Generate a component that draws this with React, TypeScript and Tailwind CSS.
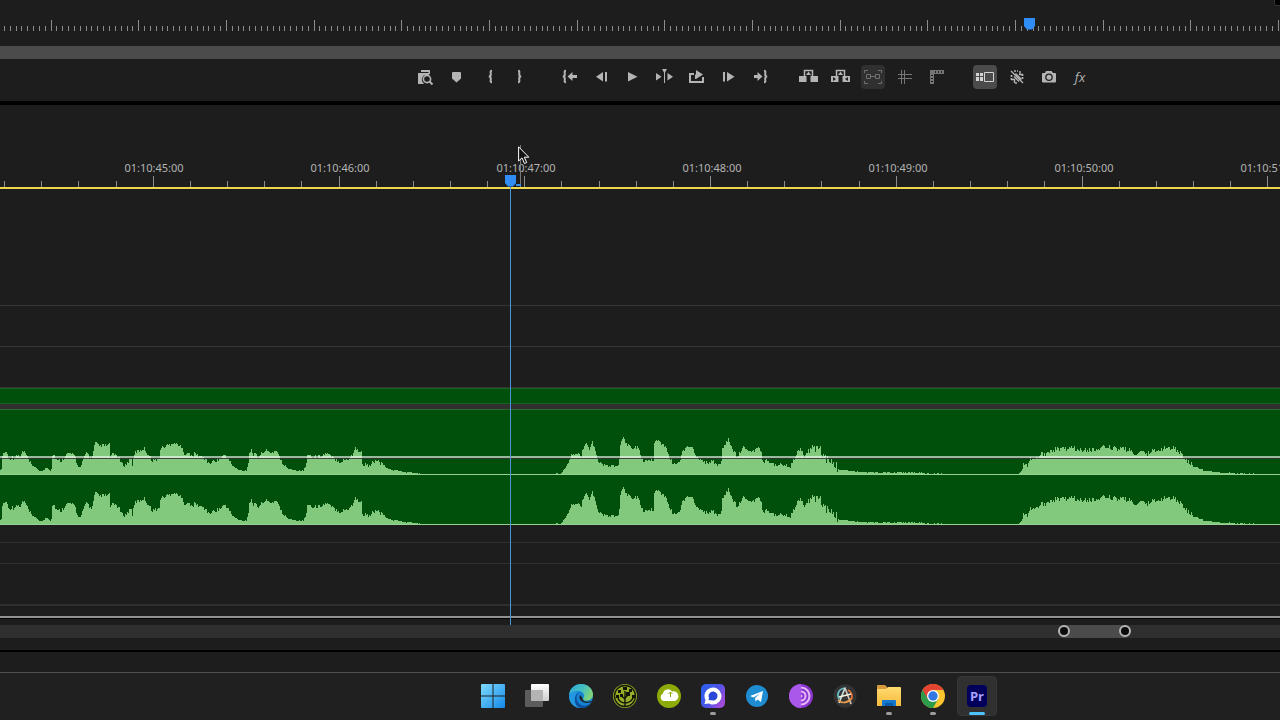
import React from 'react'

type Point = [number, number]

// x position, peak height above the channel baseline
const PEAKS: Point[] = [
  [0, 5], [1, 5], [2, 20], [5, 23], [7, 22], [8, 16], [13, 17], [18, 19], [20, 17], [22, 23], [24, 22], [26, 20],
  [28, 14], [31, 10], [35, 7], [39, 4], [43, 4], [46, 7], [50, 4], [51, 6], [52, 20], [54, 19], [57, 13], [62, 15],
  [65, 20], [69, 21], [72, 20], [75, 17], [77, 9], [80, 7], [83, 15], [86, 22], [88, 20], [90, 16], [92, 18],
  [94, 28], [95, 32], [98, 29], [104, 29], [109, 30], [110, 19], [115, 20], [118, 17], [122, 10], [126, 10],
  [131, 17], [132, 10], [134, 19], [135, 22], [139, 24], [144, 26], [148, 20], [152, 14], [159, 16], [160, 26],
  [165, 28], [172, 32], [178, 30], [182, 26], [183, 21], [187, 22], [191, 18], [195, 21], [200, 18], [205, 16],
  [208, 11], [215, 14], [220, 16], [225, 20], [229, 14], [232, 9], [237, 5], [240, 4], [246, 4], [248, 12],
  [249, 22], [251, 25], [253, 20], [258, 18], [264, 24], [270, 22], [277, 24], [280, 14], [284, 9], [288, 6],
  [293, 5], [298, 4], [303, 4], [306, 10], [307, 19], [309, 21], [312, 17], [318, 18], [326, 21], [332, 17],
  [340, 13], [348, 16], [353, 21], [355, 27], [358, 24], [361, 22], [362, 11], [367, 9], [372, 12], [377, 14],
  [382, 10], [387, 6], [394, 4], [397, 5], [400, 3], [410, 2], [418, 1], [430, 0], [550, 0], [556, 1], [561, 1],
  [563, 4], [566, 8], [570, 18], [574, 20], [577, 21], [581, 18], [582, 25], [585, 31], [589, 27], [592, 33],
  [594, 26], [597, 14], [603, 10], [610, 8], [618, 9], [619, 14], [620, 28], [622, 35], [624, 36], [626, 30],
  [630, 28], [636, 27], [638, 26], [640, 20], [643, 13], [648, 15], [653, 14], [654, 30], [656, 35], [660, 31],
  [666, 27], [668, 20], [672, 12], [675, 9], [679, 13], [682, 22], [687, 29], [692, 27], [695, 21], [700, 14],
  [706, 12], [712, 13], [719, 9], [721, 14], [722, 26], [725, 30], [728, 35], [730, 30], [734, 22], [737, 18],
  [743, 27], [750, 23], [755, 24], [759, 28], [761, 21], [762, 13], [768, 14], [775, 10], [785, 9], [790, 7],
  [793, 14], [797, 22], [800, 25], [804, 18], [808, 25], [811, 29], [814, 25], [817, 27], [820, 24], [823, 22],
  [825, 15], [830, 14], [834, 12], [838, 5], [845, 4], [853, 3], [880, 2], [898, 2], [916, 2], [930, 1],
  [970, 0], [1018, 0], [1020, 3], [1024, 11], [1027, 9], [1030, 16], [1035, 17], [1040, 20], [1047, 22],
  [1054, 25], [1060, 25], [1070, 27], [1080, 25], [1088, 24], [1098, 26], [1106, 28], [1120, 25], [1130, 25],
  [1135, 20], [1139, 24], [1145, 20], [1155, 25], [1165, 26], [1172, 28], [1178, 23], [1184, 17], [1190, 11],
  [1196, 8], [1203, 4], [1212, 3], [1222, 2], [1240, 1], [1280, 0],
]

// how strongly the peaks flutter at x
const flutter = (x: number, base: number) => {
  if (x > 806 && x < 838) return 10
  if (x > 1020 && x < 1195) return 5
  return base > 8 ? 4 : 1
}

const wavePath = () => {
  let d = 'M0 50'
  let i = 0
  for (let x = 0; x < 1280; x++) {
    while (i < PEAKS.length - 2 && PEAKS[i + 1][0] <= x) i++
    const [x0, h0] = PEAKS[i]
    const [x1, h1] = PEAKS[i + 1]
    const base = h0 + ((h1 - h0) * (x - x0)) / (x1 - x0)
    const noise = Math.abs(Math.sin(x * 12.9898) * 43758.5453) % 1
    const h = Math.max(0.5, base + (noise - 0.5) * flutter(x, base))
    d += `V${(49.5 - h).toFixed(1)}H${x + 1}`
  }
  return d + 'V50Z'
}

const WAVE = wavePath()

const LABELS = ['01:10:45:00', '01:10:46:00', '01:10:47:00', '01:10:48:00', '01:10:49:00', '01:10:50:00', '01:10:51:00']

const ToolGroup = ({ children }: { children: React.ReactNode }) => <div className="flex gap-2">{children}</div>

type ToolProps = { label: string; look?: string; children: React.ReactNode }

const Tool = ({ label, look = 'text-[#b4b4b4]', children }: ToolProps) => (
  <button type="button" aria-label={label} className={`size-6 rounded-[4px] ${look}`}>
    <svg viewBox="0 0 24 24" className="size-6" fill="currentColor" aria-hidden="true">{children}</svg>
  </button>
)

const Brace = ({ x, flip }: { x: number; flip?: boolean }) => (
  <g transform={flip ? `translate(${x} 5) scale(-1 1)` : `translate(${x} 5)`}>
    <path
      d="M4 .8C2 .8 2.8 2.5 2.8 4.2C2.8 5.7 2.2 6.5 .8 6.5C2.2 6.5 2.8 7.3 2.8 8.8C2.8 10.5 2 12.2 4 12.2"
      fill="none"
      stroke="currentColor"
      strokeWidth="2"
    />
  </g>
)

const LiftShape = () => (
  <>
    <path d="M2 11H9.500V17H2ZM13.500 11H21V17H13.500Z" />
    <path d="M7.500 11V5.500H15.500V11" fill="none" stroke="currentColor" strokeWidth="1.500" />
    <path d="M11.500 6.500L14 10H9Z" />
  </>
)

const Toolbar = () => (
  <div className="flex h-[42px] items-center justify-center gap-6 pb-[6px] pl-[226px]">
    <ToolGroup>
      <Tool label="Match frame">
        <path d="M8 5H17V9H15.5V7H8ZM5 8H9L10 9H15C11 9 8.5 12 9 16L11 19H5Z" />
        <path d="M9 8H16V10H9Z" />
        <circle cx="14" cy="14" r="3.6" fill="#1d1d1d" stroke="currentColor" strokeWidth="1.6" />
        <path d="M16.5 16.5L19.5 19.5" stroke="currentColor" strokeWidth="2" />
      </Tool>
      <Tool label="Add marker"><path d="M7 8Q7 7 8 7H15Q16 7 16 8V13.5L11.5 17.5L7 13.5Z" /></Tool>
      <Tool label="Mark in"><Brace x={11} /></Tool>
      <Tool label="Mark out"><Brace x={13} flip /></Tool>
    </ToolGroup>
    <ToolGroup>
      <Tool label="Go to in">
        <Brace x={5} />
        <path d="M10.5 11.5L15.500 7V10H20V13H15.500V16Z" />
      </Tool>
      <Tool label="Step back"><path d="M14 7V16.5L7 11.8ZM16 7H18V16.5H16Z" /></Tool>
      <Tool label="Play"><path d="M7 7L16.5 11.8L7 16.5Z" /></Tool>
      <Tool label="Play around">
        <path d="M3 8L8.5 11.8L3 15.5ZM14.5 8L20 11.8L14.5 15.5ZM9 4H14L12 7.5V18H11V7.5Z" />
      </Tool>
      <Tool label="Loop">
        <path d="M9 9H5V17H18V12" fill="none" stroke="currentColor" strokeWidth="2" />
        <path d="M10 14V9.5H11V5L18 9.5L11 14Z" />
      </Tool>
      <Tool label="Step forward"><path d="M6 7H8V16.5H6ZM10 7L17.5 11.8L10 16.5Z" /></Tool>
      <Tool label="Go to out">
        <Brace x={19} flip />
        <path d="M13.5 11.5L8.500 7V10H5V13H8.500V16Z" />
      </Tool>
    </ToolGroup>
    <ToolGroup>
      <Tool label="Lift"><LiftShape /></Tool>
      <Tool label="Extract">
        <LiftShape />
        <path d="M4 12L7 14L4 16ZM19 12L16 14L19 16Z" fill="#1d1d1d" />
      </Tool>
      <Tool label="Safe margins" look="bg-[#303030] text-[#707070]">
        <path d="M3.5 8V5.5H7M17 5.5H20.5V8M20.5 16V18.5H17M7 18.5H3.5V16M5.5 9.5H9.5V13.5H5.5ZM14.5 9.5H18.5V13.5H14.5ZM9.5 11.500H14.5" fill="none" stroke="currentColor" />
      </Tool>
      <Tool label="Show guides" look="text-[#757575]">
        <path d="M5 9.5H19M5 13.5H19M8.5 5V19M11.5 5V19" stroke="currentColor" />
      </Tool>
      <Tool label="Show rulers" look="text-[#757575]">
        <path d="M5 5H19V9H9V19H5Z" />
        <path d="M10.5 6V8M13.5 6V8M16.5 6V8M6 10.5H8M6 13.5H8M6 16.5H8" stroke="#1d1d1d" />
      </Tool>
    </ToolGroup>
    <ToolGroup>
      <Tool label="Multi-camera" look="bg-[#4b4b4b] text-[#d4d4d4]">
        <path d="M3 8H6V11H3ZM7 8H10V11H7ZM3 12H6V16H3ZM7 12H10V16H7Z" />
        <path d="M11.5 7.5H20.5V16.5H11.5Z" fill="none" stroke="currentColor" />
      </Tool>
      <Tool label="Proxies">
        <g fill="none" stroke="currentColor" strokeWidth="1.7">
          <path d="M6.500 10V16M9 6H13M10 18H13M17.500 9V15" strokeDasharray="2 1" />
          <path d="M6 6L18 18M9 11.500L14 16.500M10.500 8.500L16.500 14.500" strokeWidth="1.300" />
          <path d="M14 9.500H18M15 6V10M6 14.500H10M9.500 14V18" strokeWidth="1.400" />
        </g>
      </Tool>
      <Tool label="Export frame">
        <path fillRule="evenodd" d="M9 6H14.500L16 8H18Q19 8 19 9V16.500Q19 17.500 18 17.500H6Q5 17.500 5 16.500V9Q5 8 6 8H8ZM12 8.500A3.800 3.800 0 1 0 12 16.100A3.800 3.800 0 1 0 12 8.500Z" />
        <circle cx="12" cy="12.300" r="2.500" />
      </Tool>
      <button type="button" className="size-6 pr-[2px] font-['Open_Sans','Noto_Sans',sans-serif] text-[13px] leading-6 text-[#b4b4b4] italic">fx</button>
    </ToolGroup>
  </div>
)

type TicksProps = { start: number; step: number; every: number; count: number; low: number }

const Ticks = ({ start, step, every, count, low }: TicksProps) => (
  <svg className="block h-[11px] w-full" shapeRendering="crispEdges" aria-hidden="true">
    {Array.from({ length: count }, (_, i) => (
      <rect key={i} x={Math.round(start + i * step)} y={i % every === 0 ? 0 : low} width="1" height="11" fill="#8c8c8c" />
    ))}
  </svg>
)

const Marker = () => (
  <svg viewBox="0 0 11 12" className="block h-3 w-[11px]" aria-hidden="true">
    <path d="M0 0H11V8L8 11.500H3L0 8Z" fill="#2f8df5" />
  </svg>
)

const Channel = () => (
  <svg viewBox="0 0 1280 50" preserveAspectRatio="none" className="block h-[50px] w-full" aria-hidden="true">
    <path d={WAVE} fill="#82c97e" shapeRendering="crispEdges" />
    <rect y="49" width="1280" height="1" fill="#96d392" />
  </svg>
)

const Timeline = () => (
  <section className="relative overflow-hidden border-t-4 border-black">
    <div className="h-[71px] pt-[55px]">
      <div className="flex pl-[61px] font-['Noto_Sans','Open_Sans',sans-serif] text-[11px] leading-4 text-[#b4b4b4]">
        {LABELS.map(t => (
          <span key={t} className="w-[186px] shrink-0 text-center">{t}</span>
        ))}
      </div>
    </div>
    <Ticks start={-33} step={37.15} every={5} count={80} low={5} />
    <div className="h-[2px] bg-[#ebd84e]" />
    <div className="h-[117px] border-b border-[#343434]" />
    <div className="h-[41px] border-b border-[#343434]" />
    <div className="h-[41px] border-b border-[#343434]" />
    <div className="h-4 border-y border-[#16611f] bg-[#00500b]" />
    <div className="h-[5px] bg-[#2f2f2f]" />
    <div className="relative border-t border-[#2a6a30] bg-[#00500b] pt-[15px]">
      <Channel />
      <Channel />
      <div className="absolute inset-x-0 top-[46px] h-[3px] border-b border-black/70 bg-white/60" />
    </div>
    <div className="h-[18px] border-b border-[#303030]" />
    <div className="h-[21px] border-b border-[#303030]" />
    <div className="h-[42px] border-b-2 border-[#2f2f2f]" />
    <div className="h-3 border-b-2 border-[#919191]" />
    <div className="h-[7px] border-t border-black" />
    <svg className="absolute top-[40px] left-[516px] h-[43px] w-2" shapeRendering="crispEdges" aria-hidden="true">
      <path d="M4 0H5V42H4Z" fill="#777" />
      <path d="M0 39H5V41H0Z" fill="#2f8df5" />
    </svg>
    <div className="absolute top-[70px] bottom-0 left-[505px] flex flex-col items-center">
      <Marker />
      <div className="w-px grow bg-[#4a93dc]" />
    </div>
    <svg viewBox="0 0 12 19" className="absolute top-[41px] left-[518px] h-[19px] w-3" aria-hidden="true">
      <path d="M.6 .8V15L4 11.900L6.500 17.500L8.700 16.500L6.300 11.200H10.800Z" fill="#111" stroke="#fff" />
    </svg>
  </section>
)

const Knob = ({ label }: { label: string }) => (
  <button type="button" aria-label={label} className="size-3 shrink-0 rounded-full border-2 border-[#b4b4b4] bg-[#0c0c0c]" />
)

const ZoomBar = () => (
  <div className="flex h-[13px] justify-end bg-[#2f2f2f] pr-[149px]">
    <div className="flex w-[73px] justify-between rounded-full bg-[#4b4b4b]">
      <Knob label="Zoom start" />
      <Knob label="Zoom end" />
    </div>
  </div>
)

const TASKS: { name: string; open?: boolean; active?: boolean; art: React.ReactNode }[] = [
  {
    name: 'Start',
    art: <path d="M0 1Q0 0 1 0H11.500V11.500H0ZM12.500 0H23Q24 0 24 1V11.500H12.500ZM0 12.500H11.500V24H1Q0 24 0 23ZM12.500 12.500H24V23Q24 24 23 24H12.500Z" fill="url(#win)" />,
  },
  {
    name: 'Task view',
    art: (
      <>
        <rect y="6" width="18" height="17" rx="1" fill="#5c5c5c" />
        <rect x="6" width="18" height="17" rx="1" fill="url(#pane)" />
        <rect x="6" y="6" width="12" height="11" fill="#b4b4b4" />
      </>
    ),
  },
  {
    name: 'Edge',
    art: (
      <>
        <circle cx="12" cy="12" r="12" fill="#1583d4" />
        <path d="M0 11C1 4 6 0 12 0C19 0 24 5 24 10.500C24 15 20 17 16 16.500C13.500 16 14 14.500 15 13C16 10 13 7 9 7C5 7 1.500 9 0 11Z" fill="url(#edge)" />
        <path d="M0 12C2 8 6 7 9 8C6 10 5 14 7 18C9 21 12 23 15 23.500C6 26 0 19 0 12Z" fill="#2397e0" />
        <path d="M10 9C6 12 7 18 12 21C16 23 20 21 22.500 18.500C20 22 17 24 13 24C8 24 5 19 6 14C6.500 11 8 9 10 9Z" fill="#0c4f9e" />
        <path d="M11 11C9 15 13 19 18 19C20 19 22 18 22.500 18C23 17.500 22.500 17 22 17C18 19 13 17 13.500 14Z" fill="#202020" />
      </>
    ),
  },
  {
    name: 'Tree',
    art: (
      <>
        <circle cx="12" cy="12" r="12" fill="#96ac2a" />
        <circle cx="12" cy="12" r="10.500" fill="none" stroke="#171a05" strokeWidth="1.300" />
        <path d="M5 6H8V9H5ZM10 3H14V6H10ZM16 5H19V8H16ZM3 11H6V14H3ZM7 10H10V13H7ZM13 8H17V12H13ZM19 11H22V14H19Z" fill="#111405" />
        <path d="M12 22V7M12 19C9 19 5 17 5 13M12 19C15 19 20 17 20 13M12 15L8.500 12M12 14L15 11" stroke="#111405" strokeWidth="1.400" fill="none" />
      </>
    ),
  },
  {
    name: 'Cloud',
    art: (
      <>
        <circle cx="12" cy="12" r="12" fill="#8cab08" />
        <path d="M6.500 17A4 4 0 0 1 6 9.500A5 5 0 0 1 15 7.500A4.800 4.800 0 0 1 18 16.900Z" fill="#fff" />
        <path d="M13.500 8V13M11.500 10L13.500 8L15.500 10" fill="none" stroke="#8cab08" />
      </>
    ),
  },
  {
    name: 'Messenger',
    open: true,
    art: (
      <>
        <rect width="24" height="24" rx="5" fill="url(#chat)" />
        <path d="M3.500 20L4.500 16A8.500 8.500 0 1 1 12 20.500C10 20.500 9 20 8 19.500Z" fill="#fff" />
        <path d="M7.500 16L8 14A4.500 4.500 0 1 1 12 16.500Z" fill="#2d48d8" />
      </>
    ),
  },
  {
    name: 'Telegram',
    art: (
      <>
        <circle cx="12" cy="12" r="11" fill="#1e8dd2" />
        <path d="M5 12L18 7L16 18L12.500 15.500L10.500 17.500L10 14L15 9.500L8.500 13.500Z" fill="#fff" />
      </>
    ),
  },
  {
    name: 'Tor',
    art: (
      <>
        <circle cx="12" cy="12" r="12" fill="#8e35d1" />
        <path d="M12 0A12 12 0 0 0 12 24Z" fill="#aa58e8" />
        <path d="M12 3.500A8.500 8.500 0 0 1 12 20.500M12 7.500A4.500 4.500 0 0 1 12 16.500" fill="none" stroke="#e2b9f8" strokeWidth="2" />
        <path d="M12 10.500A1.500 1.500 0 0 1 12 13.500" fill="#e2b9f8" />
      </>
    ),
  },
  {
    name: 'Aperture',
    art: (
      <>
        <circle cx="12" cy="12" r="11.500" fill="#343434" />
        <g fill="none" strokeWidth="1.700">
          <path d="M6 15C3 9 7 4 13 4" stroke="#68bfc5" />
          <path d="M12 4L6 19" stroke="#c8e0df" />
          <path d="M12 4L18 20" stroke="#d2c3b8" />
          <path d="M5 16C9 20 15 19 19 14" stroke="#eea04a" />
          <path d="M15 6C19 8 20 12 18 16" stroke="#e4763b" />
          <path d="M6 13L18 10" stroke="#f2f0de" />
        </g>
      </>
    ),
  },
  {
    name: 'Explorer',
    open: true,
    art: (
      <>
        <path d="M0 2Q0 1 1 1H8L10 3V7H0Z" fill="#d99a3d" />
        <path d="M0 5H9L11 3H23Q24 3 24 4V22H0Z" fill="url(#folder)" />
        <path d="M5 22V17Q5 16 6 16H18Q19 16 19 17V22Z" fill="#1478cf" />
        <path d="M8 19H16V22H8Z" fill="#0b5aa8" />
      </>
    ),
  },
  {
    name: 'Chrome',
    open: true,
    art: (
      <>
        <circle cx="12" cy="12" r="12" fill="#fbc52f" />
        <path d="M12 12L1.600 6A12 12 0 0 0 12 24L17.200 15Z" fill="#2c9b4a" />
        <path d="M12 12L6.800 15L1.600 6A12 12 0 0 1 22.400 6H12Z" fill="#e54432" />
        <circle cx="12" cy="12" r="6" fill="#fff" />
        <circle cx="12" cy="12" r="4.700" fill="#3478e5" />
      </>
    ),
  },
  {
    name: 'Premiere Pro',
    active: true,
    art: (
      <>
        <rect x="2" y="1" width="20" height="22" rx="4" fill="#00005b" />
        <text x="12" y="17" textAnchor="middle" fontSize="13" fontWeight="700" fontFamily="Open Sans, Noto Sans, sans-serif" fill="#a6a0ff">Pr</text>
      </>
    ),
  },
]

const Taskbar = () => (
  <nav className="flex h-12 justify-center gap-1 border-t border-[#505050] bg-[#202020] pt-[3px] pl-[190px]">
    <svg className="absolute size-0" aria-hidden="true">
      <defs>
        <linearGradient id="win" x2="1" y2="1"><stop stopColor="#7fdcff" /><stop offset="1" stopColor="#1388e8" /></linearGradient>
        <linearGradient id="pane" x2="0" y2="1"><stop stopColor="#fff" /><stop offset="1" stopColor="#cfcfcf" /></linearGradient>
        <linearGradient id="edge" x2="1" y2=".4"><stop stopColor="#2da9dc" /><stop offset=".6" stopColor="#45bfc0" /><stop offset="1" stopColor="#7fd37d" /></linearGradient>
        <linearGradient id="chat" x2="1" y2=".6"><stop stopColor="#2860ee" /><stop offset=".6" stopColor="#4d55e8" /><stop offset="1" stopColor="#a24bd8" /></linearGradient>
        <linearGradient id="folder" x2="0" y2="1"><stop stopColor="#ffdc70" /><stop offset="1" stopColor="#f6b93b" /></linearGradient>
      </defs>
    </svg>
    {TASKS.map(t => (
      <button
        key={t.name}
        type="button"
        aria-label={t.name}
        className={`flex size-10 flex-col items-center rounded ${t.active ? 'border border-[#363636] bg-[#303030] pt-[7px]' : 'pt-2'}`}
      >
        <svg viewBox="0 0 24 24" className="size-6 shrink-0" aria-hidden="true">{t.art}</svg>
        {t.open && <span className="mt-1 h-[3px] w-[6px] shrink-0 rounded-full bg-[#9c9c9c]" />}
        {t.active && <span className="mt-1 h-[3px] w-4 shrink-0 rounded-full bg-[#4cc2ff]" />}
      </button>
    ))}
  </nav>
)

const App: React.FC = () => (
  <main className="min-h-screen w-full overflow-hidden bg-[#1d1d1d]">
    <div className="relative h-[46px] overflow-hidden pt-5">
      <Ticks start={-37.1} step={5.845} every={15} count={500} low={6} />
      <div className="absolute top-[18px] left-[1024px]"><Marker /></div>
      <div className="absolute -top-1 -right-1 size-[10px] rounded-[3px] border border-[#333] bg-black" />
    </div>
    <div className="h-[13px] bg-[#4b4b4b]" />
    <Toolbar />
    <Timeline />
    <ZoomBar />
    <div className="h-3" />
    <div className="h-[2px] bg-black" />
    <div className="h-5" />
    <Taskbar />
  </main>
)

export default App
